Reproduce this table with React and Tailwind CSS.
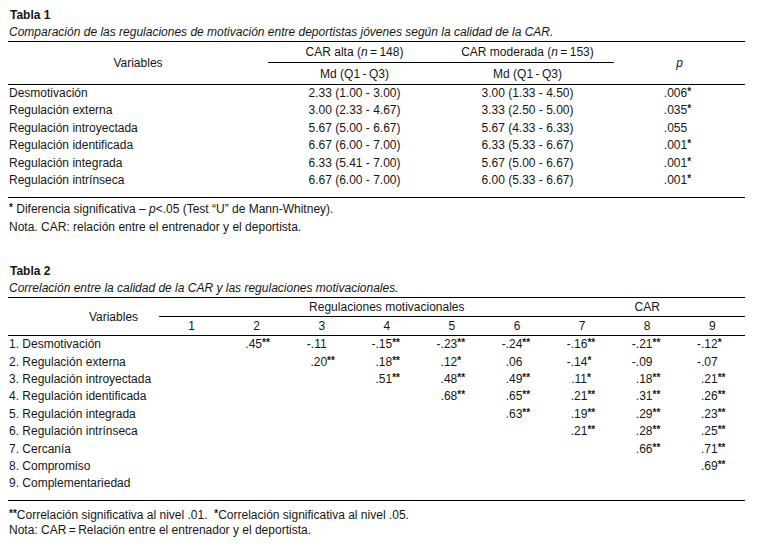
const T1 = [
  ['Desmotivación', '2.33 (1.00 - 3.00)', '3.00 (1.33 - 4.50)', '.006', '*'],
  ['Regulación externa', '3.00 (2.33 - 4.67)', '3.33 (2.50 - 5.00)', '.035', '*'],
  ['Regulación introyectada', '5.67 (5.00 - 6.67)', '5.67 (4.33 - 6.33)', '.055', ''],
  ['Regulación identificada', '6.67 (6.00 - 7.00)', '6.33 (5.33 - 6.67)', '.001', '*'],
  ['Regulación integrada', '6.33 (5.41 - 7.00)', '5.67 (5.00 - 6.67)', '.001', '*'],
  ['Regulación intrínseca', '6.67 (6.00 - 7.00)', '6.00 (5.33 - 6.67)', '.001', '*'],
]

const T2 = [
  ['1. Desmotivación', ['', '.45**', '-.11', '-.15**', '-.23**', '-.24**', '-.16**', '-.21**', '-.12*']],
  ['2. Regulación externa', ['', '', '.20**', '.18**', '.12*', '.06', '-.14*', '-.09', '-.07']],
  ['3. Regulación introyectada', ['', '', '', '.51**', '.48**', '.49**', '.11*', '.18**', '.21**']],
  ['4. Regulación identificada', ['', '', '', '', '.68**', '.65**', '.21**', '.31**', '.26**']],
  ['5. Regulación integrada', ['', '', '', '', '', '.63**', '.19**', '.29**', '.23**']],
  ['6. Regulación intrínseca', ['', '', '', '', '', '', '.21**', '.28**', '.25**']],
  ['7. Cercanía', ['', '', '', '', '', '', '', '.66**', '.71**']],
  ['8. Compromiso', ['', '', '', '', '', '', '', '', '.69**']],
  ['9. Complementariedad', ['', '', '', '', '', '', '', '', '']],
]

function Star({ children }) {
  return <span className="relative -top-[2px] text-[10px] font-bold">{children}</span>
}

function Corr({ value }) {
  if (!value) return null
  const m = value.match(/^(-?)(\.\d+)(\**)$/)
  return (
    <span className="inline-flex items-baseline">
      <span className="w-[5px] text-right">{m[1]}</span>
      <span>{m[2]}</span>
      <span className="w-[11px] text-left">
        <Star>{m[3]}</Star>
      </span>
    </span>
  )
}

export default function App() {
  return (
    <div className="w-[764px] h-[556px] bg-white text-[#161616] font-['Liberation_Sans',Arial,sans-serif] text-[12px] pl-[8px] pt-[7px]">
      {/* Tabla 1 */}
      <div className="w-[737px]">
        <div className="leading-[17px] font-bold pl-[2px]">Tabla 1</div>
        <div className="leading-[17px] italic pl-[1px]">
          Comparación de las regulaciones de motivación entre deportistas jóvenes según la calidad de la CAR.
        </div>

        <div className="grid grid-cols-[260px_173px_173px_131px] grid-rows-[21px_21px] border-t border-b border-black">
          <div className="row-span-2 flex items-center justify-center">Variables</div>
          <div className="flex items-center justify-center border-b border-black">
            CAR alta (<span className="italic">n</span>{'\u2009=\u2009'}148)
          </div>
          <div className="flex items-center justify-center border-b border-black">
            CAR moderada (<span className="italic">n</span>{'\u2009=\u2009'}153)
          </div>
          <div className="row-span-2 flex items-center justify-center italic">p</div>
          <div className="flex items-center justify-center">Md (Q1{'\u2009-\u2009'}Q3)</div>
          <div className="flex items-center justify-center">Md (Q1{'\u2009-\u2009'}Q3)</div>
        </div>

        <div className="border-b border-black pb-[8px]">
          {T1.map((r) => (
            <div key={r[0]} className="flex h-[17.4px] items-center leading-[17.4px]">
              <div className="w-[260px] pl-[1px]">{r[0]}</div>
              <div className="w-[173px] text-center">{r[1]}</div>
              <div className="w-[173px] text-center">{r[2]}</div>
              <div className="w-[131px] flex justify-center">
                <span className="inline-flex items-baseline">
                  <span>{r[3]}</span>
                  <span className="w-[8px]">
                    <Star>{r[4]}</Star>
                  </span>
                </span>
              </div>
            </div>
          ))}
        </div>

        <div className="pt-[3px] leading-[17.4px] pl-[1px]">
          <div>
            <Star>*</Star> Diferencia significativa – <span className="italic">p</span>&lt;.05 (Test “U” de Mann-Whitney).
          </div>
          <div>Nota. CAR: relación entre el entrenador y el deportista.</div>
        </div>
      </div>

      {/* Tabla 2 */}
      <div className="w-[737px] mt-[27px]">
        <div className="leading-[17px] font-bold pl-[2px]">Tabla 2</div>
        <div className="leading-[17px] italic pl-[1px]">
          Correlación entre la calidad de la CAR y las regulaciones motivacionales.
        </div>

        <div className="grid grid-cols-[151px_repeat(9,65.1px)] grid-rows-[19px_18px] border-t border-b border-black">
          <div className="row-span-2 flex items-center justify-center pl-[60px]">Variables</div>
          <div className="border-b border-black"></div>
          <div className="col-span-5 flex items-center justify-center border-b border-black">
            Regulaciones motivacionales
          </div>
          <div className="col-span-3 flex items-center justify-center border-b border-black">CAR</div>
          {[1, 2, 3, 4, 5, 6, 7, 8, 9].map((n) => (
            <div key={n} className="flex items-center justify-center">
              {n}
            </div>
          ))}
        </div>

        <div className="border-b border-black pb-[7px]">
          {T2.map(([label, vals]) => (
            <div key={label} className="flex h-[17.4px] items-center leading-[17.4px]">
              <div className="w-[151px] pl-[1px]">{label}</div>
              {vals.map((v, i) => (
                <div key={i} className="w-[65.1px] flex justify-center">
                  <Corr value={v} />
                </div>
              ))}
            </div>
          ))}
        </div>

        <div className="pt-[7px] leading-[15px] pl-[1px]">
          <div>
            <Star>**</Star>Correlación significativa al nivel .01.&nbsp; <Star>*</Star>Correlación significativa al nivel .05.
          </div>
          <div>Nota: CAR{'\u2009=\u2009'}Relación entre el entrenador y el deportista.</div>
        </div>
      </div>
    </div>
  )
}
